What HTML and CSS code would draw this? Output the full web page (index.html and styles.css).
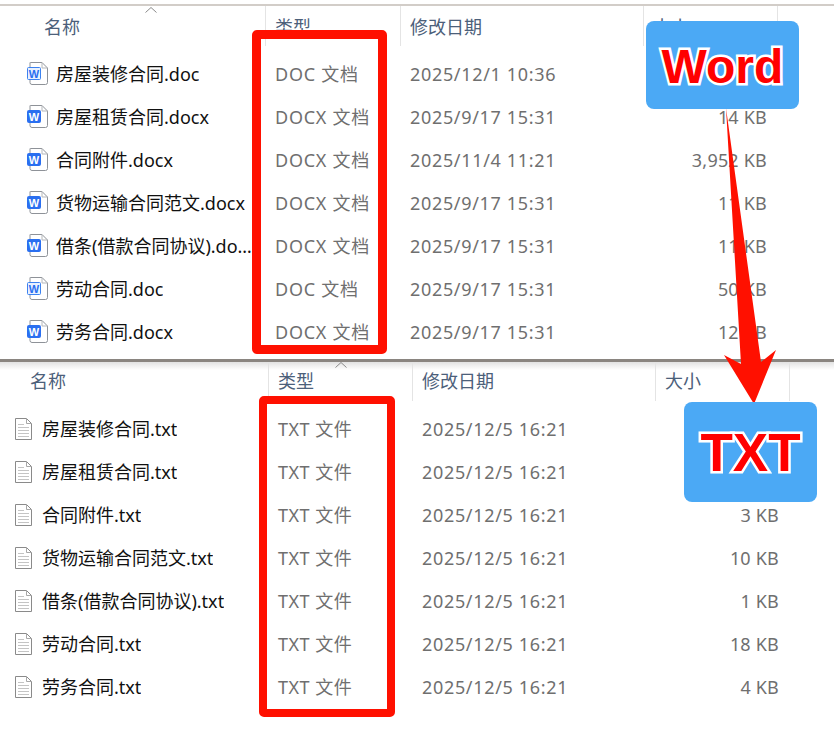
FILE: index.html
```html
<!DOCTYPE html>
<html lang="zh-CN">
<head>
<meta charset="utf-8">
<title>Word 转 TXT</title>
<link rel="stylesheet" href="styles.css">
</head>
<body>
<svg class="defs" width="0" height="0" aria-hidden="true">
  <symbol id="page" viewBox="0 0 21 23">
    <path d="M3.5 .5H15L20.5 6V20.5a2 2 0 0 1-2 2H5a2 2 0 0 1-2-2V.5z" fill="#fff" stroke="#8e9298"/>
    <path d="M15 .5V6H20.5" fill="none" stroke="#b4b7bb"/>
  </symbol>
  <symbol id="doc" viewBox="0 0 21 23">
    <use href="#page"/>
    <rect x=".5" y="5.5" width="13" height="12" rx="1" fill="#e8f1ff" stroke="#3c82f0"/>
    <text x="7" y="15.5" class="w w-doc">W</text>
  </symbol>
  <symbol id="docx" viewBox="0 0 21 23">
    <use href="#page"/>
    <rect x="0" y="5" width="14" height="13" rx="2" fill="#2a6ff0"/>
    <text x="7" y="15.5" class="w w-docx">W</text>
  </symbol>
  <symbol id="txt" viewBox="0 0 17 22">
    <path d="M.5 .5H11.5L16.5 5.5V21.5H.5z" fill="#fff" stroke="#8a8a8a"/>
    <path d="M11.5 .5V5.5H16.5" fill="none" stroke="#a8a8a8"/>
    <path d="M3 6.5H9M3 9.5H14M3 12.5H14M3 15.5H14M3 18.5H14" stroke="#c4c4c4" fill="none"/>
  </symbol>
</svg>
<main class="stage">
  <section class="panel panel-word">
    <div class="row head">
      <div class="cell name">名称</div><div class="cell">类型</div><div class="cell">修改日期</div><div class="cell">大小</div>
    </div>
    <div class="rows">
      <div class="row"><div class="cell name"><svg class="icon"><use href="#doc"/></svg><span class="fname">房屋装修合同.doc</span></div><div class="cell type">DOC 文档</div><div class="cell date">2025/12/1 10:36</div><div class="cell size">14 KB</div></div>
      <div class="row"><div class="cell name"><svg class="icon"><use href="#docx"/></svg><span class="fname">房屋租赁合同.docx</span></div><div class="cell type">DOCX 文档</div><div class="cell date">2025/9/17 15:31</div><div class="cell size">14 KB</div></div>
      <div class="row"><div class="cell name"><svg class="icon"><use href="#docx"/></svg><span class="fname">合同附件.docx</span></div><div class="cell type">DOCX 文档</div><div class="cell date">2025/11/4 11:21</div><div class="cell size">3,952 KB</div></div>
      <div class="row"><div class="cell name"><svg class="icon"><use href="#docx"/></svg><span class="fname">货物运输合同范文.docx</span></div><div class="cell type">DOCX 文档</div><div class="cell date">2025/9/17 15:31</div><div class="cell size">11 KB</div></div>
      <div class="row"><div class="cell name"><svg class="icon"><use href="#docx"/></svg><span class="fname">借条(借款合同协议).docx</span></div><div class="cell type">DOCX 文档</div><div class="cell date">2025/9/17 15:31</div><div class="cell size">11 KB</div></div>
      <div class="row"><div class="cell name"><svg class="icon"><use href="#doc"/></svg><span class="fname">劳动合同.doc</span></div><div class="cell type">DOC 文档</div><div class="cell date">2025/9/17 15:31</div><div class="cell size">50 KB</div></div>
      <div class="row"><div class="cell name"><svg class="icon"><use href="#docx"/></svg><span class="fname">劳务合同.docx</span></div><div class="cell type">DOCX 文档</div><div class="cell date">2025/9/17 15:31</div><div class="cell size">12 KB</div></div>
    </div>
    <svg class="caret caret-word" viewBox="0 0 12 6"><path d="M.5 5.5L6 .5L11.5 5.5" fill="none" stroke="#8a8a8a"/></svg>
  </section>
  <section class="panel panel-txt">
    <div class="row head">
      <div class="cell name">名称</div><div class="cell">类型</div><div class="cell">修改日期</div><div class="cell">大小</div>
    </div>
    <div class="rows">
      <div class="row"><div class="cell name"><svg class="icon"><use href="#txt"/></svg><span class="fname">房屋装修合同.txt</span></div><div class="cell type">TXT 文件</div><div class="cell date">2025/12/5 16:21</div><div class="cell size">5 KB</div></div>
      <div class="row"><div class="cell name"><svg class="icon"><use href="#txt"/></svg><span class="fname">房屋租赁合同.txt</span></div><div class="cell type">TXT 文件</div><div class="cell date">2025/12/5 16:21</div><div class="cell size">5 KB</div></div>
      <div class="row"><div class="cell name"><svg class="icon"><use href="#txt"/></svg><span class="fname">合同附件.txt</span></div><div class="cell type">TXT 文件</div><div class="cell date">2025/12/5 16:21</div><div class="cell size">3 KB</div></div>
      <div class="row"><div class="cell name"><svg class="icon"><use href="#txt"/></svg><span class="fname">货物运输合同范文.txt</span></div><div class="cell type">TXT 文件</div><div class="cell date">2025/12/5 16:21</div><div class="cell size">10 KB</div></div>
      <div class="row"><div class="cell name"><svg class="icon"><use href="#txt"/></svg><span class="fname">借条(借款合同协议).txt</span></div><div class="cell type">TXT 文件</div><div class="cell date">2025/12/5 16:21</div><div class="cell size">1 KB</div></div>
      <div class="row"><div class="cell name"><svg class="icon"><use href="#txt"/></svg><span class="fname">劳动合同.txt</span></div><div class="cell type">TXT 文件</div><div class="cell date">2025/12/5 16:21</div><div class="cell size">18 KB</div></div>
      <div class="row"><div class="cell name"><svg class="icon"><use href="#txt"/></svg><span class="fname">劳务合同.txt</span></div><div class="cell type">TXT 文件</div><div class="cell date">2025/12/5 16:21</div><div class="cell size">4 KB</div></div>
    </div>
    <svg class="caret caret-txt" viewBox="0 0 12 6"><path d="M.5 5.5L6 .5L11.5 5.5" fill="none" stroke="#8a8a8a"/></svg>
  </section>
  <div class="frame frame-word"></div>
  <div class="frame frame-txt"></div>
  <svg class="arrow" viewBox="0 0 834 734"><polygon points="726,108 761,362 776,350 754,404 724,355 741,364" fill="#ff1000"/></svg>
  <div class="badge badge-word"><span>Word</span></div>
  <div class="badge badge-txt"><span>TXT</span></div>
</main>
</body>
</html>
```
FILE: styles.css
```css
* { box-sizing: border-box; }
html, body { margin: 0; padding: 0; background: #fff; }
body { width: 834px; height: 734px; overflow: hidden; font-family: "Noto Sans", "Noto Sans CJK SC", sans-serif; font-size: 18px; color: #111; }
.defs { position: absolute; }
.stage { position: relative; width: 834px; height: 734px; padding-top: 4px; }

.panel { position: relative; background: #fff; }
.panel-word {
  --c1: 265px; --c2: 135px; --c3: 243px; --c4: 135px;
  --name-pad: 27px; --icon-gap: 8px; --icon-w: 21px; --icon-h: 23px;
  height: 358px;
  border-top: 2px solid #d2cdc8;
  border-bottom: 3px solid #8a8580;
}
.panel-txt {
  --c1: 268px; --c2: 144px; --c3: 243px; --c4: 135px;
  --name-pad: 15px; --icon-gap: 10px; --icon-w: 17px; --icon-h: 22px;
  background: linear-gradient(#e2e2e2, #fff 8px);
}

.row { display: grid; grid-template-columns: var(--c1) var(--c2) var(--c3) var(--c4); align-items: center; height: 43px; }
.rows { padding-top: 6px; }
.head { height: 40px; align-items: stretch; color: #4c607a; }
.panel-txt .head { height: 39px; }
.head .cell { display: flex; align-items: center; padding: 2px 0 0 9px; border-left: 1px solid #e4e4e4; }
.panel-txt .head .cell { padding-top: 0; padding-bottom: 1px; }
.head .cell.name { border-left: 0; color: #4c607a; }
.head .cell:last-child { border-right: 1px solid #e4e4e4; }
.panel-word .head .name { padding-left: 44px; }
.panel-txt .head .name { padding-left: 30px; }

.cell { padding-left: 10px; white-space: nowrap; line-height: 24px; }
.cell.name { display: flex; align-items: center; gap: var(--icon-gap); padding-left: var(--name-pad); padding-right: 13px; min-width: 0; color: #111; }
.fname { overflow: hidden; text-overflow: ellipsis; min-width: 0; }
.icon { flex: none; width: var(--icon-w); height: var(--icon-h); }
.type { color: #6f6f6f; letter-spacing: .5px; }
.panel-word .type { letter-spacing: .75px; }
.date { color: #6f6f6f; letter-spacing: .67px; }
.size { color: #6f6f6f; text-align: right; padding-right: 11px; letter-spacing: .2px; }

.w { font-family: "Liberation Sans", sans-serif; font-weight: 700; font-size: 11px; text-anchor: middle; }
.w-doc { fill: #2a6ff0; }
.w-docx { fill: #fff; }

.caret { position: absolute; width: 12px; height: 6px; }
.caret-word { left: 145px; top: 1px; }
.caret-txt { left: 335px; top: 0; }

.frame { position: absolute; border: 9px solid #ff1000; border-radius: 5px; }
.frame-word { left: 252px; top: 30px; width: 135px; height: 324px; }
.frame-txt { left: 259px; top: 396px; width: 136px; height: 321px; border-width: 8px; }

.arrow { position: absolute; left: 0; top: 0; width: 834px; height: 734px; }

.badge { position: absolute; display: flex; align-items: center; justify-content: center; background: #4ba9f5; border-radius: 8px; font-family: "Liberation Sans", sans-serif; font-weight: 700; color: #ff0000; -webkit-text-stroke: 5px #fff; paint-order: stroke fill; }
.badge-word { left: 646px; top: 21px; width: 153px; height: 88px; padding-top: 3px; font-size: 48px; }
.badge-txt { left: 684px; top: 402px; width: 133px; height: 100px; padding-top: 1px; font-size: 53px; }
```
